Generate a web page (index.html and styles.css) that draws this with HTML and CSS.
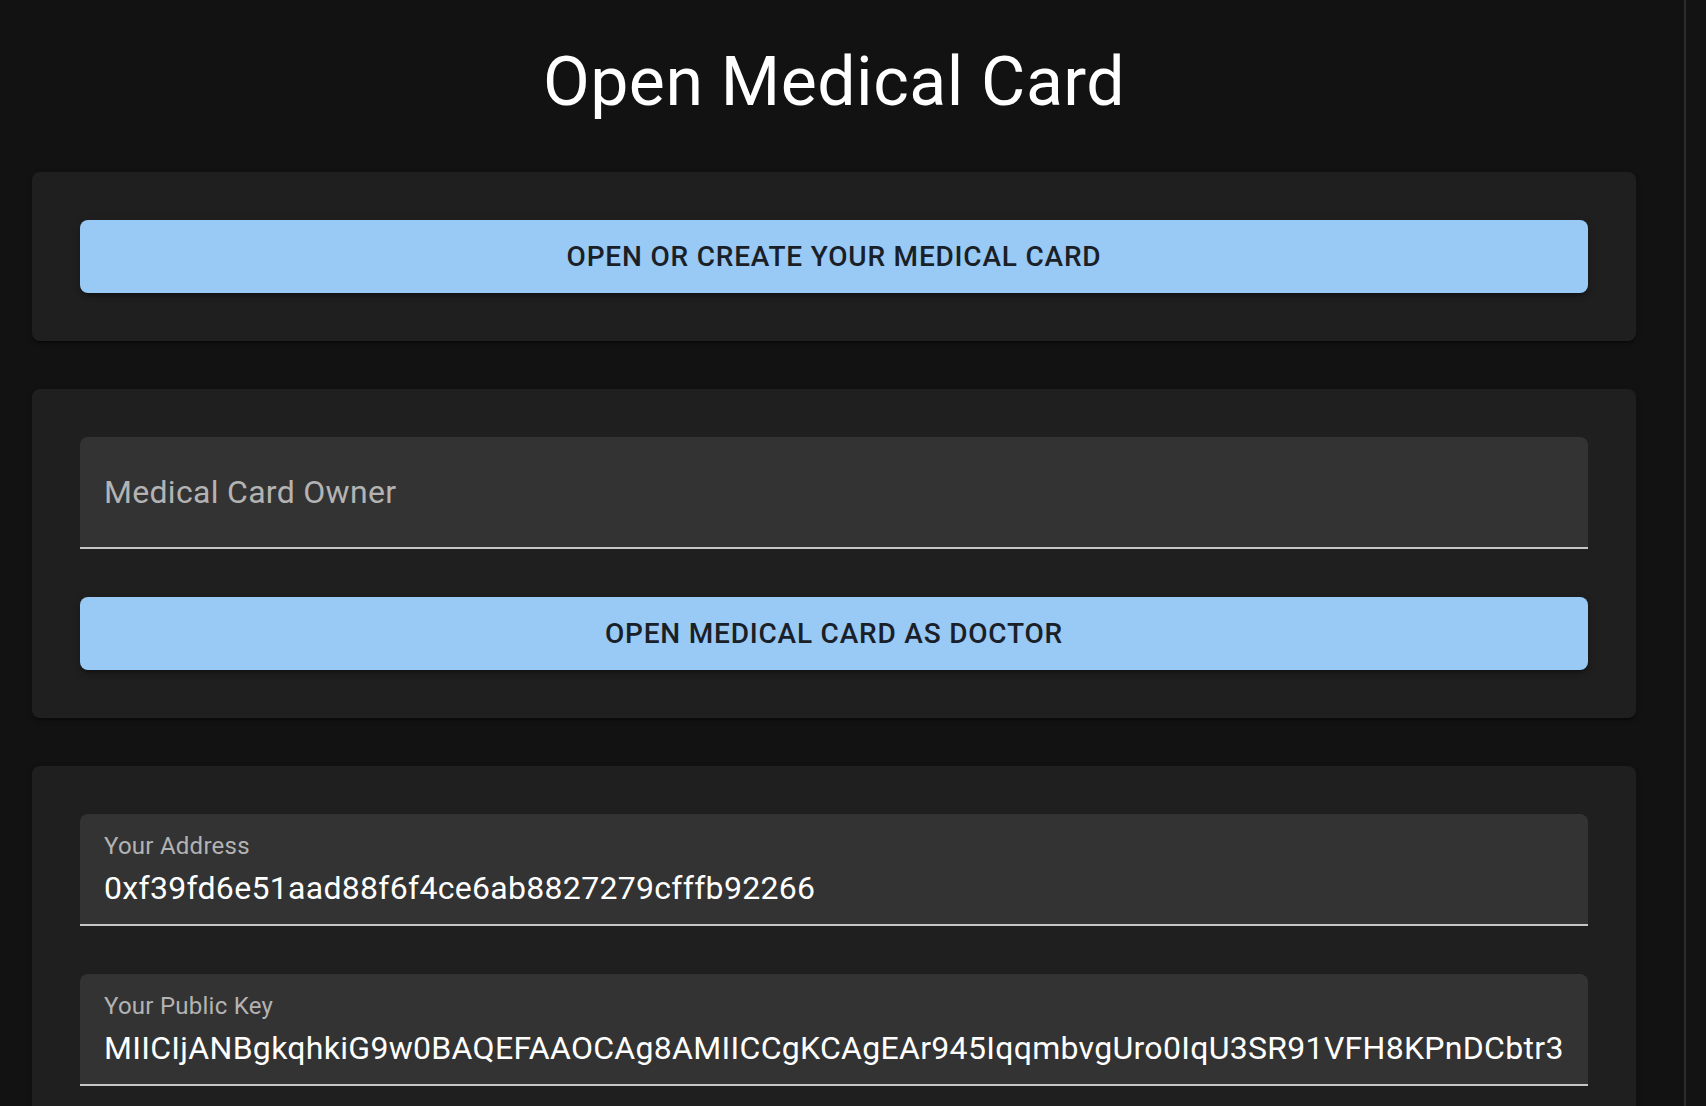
FILE: index.html
```html
<!DOCTYPE html>
<html lang="en">
<head>
<meta charset="utf-8">
<title>Open Medical Card</title>
<link rel="stylesheet" href="styles.css">
</head>
<body>
<div class="app">
  <main class="main">
    <h1 class="title">Open Medical Card</h1>

    <section class="card">
      <button class="btn" type="button">Open or create your medical card</button>
    </section>

    <section class="card">
      <div class="field">
        <label class="field-label" for="owner">Medical Card Owner</label>
        <input class="field-input" id="owner" type="text">
      </div>
      <button class="btn btn-spaced" type="button">Open medical card as doctor</button>
    </section>

    <section class="card">
      <div class="field">
        <label class="field-label shrink" for="addr">Your Address</label>
        <input class="field-input" id="addr" type="text" readonly value="0xf39fd6e51aad88f6f4ce6ab8827279cfffb92266">
      </div>
      <div class="field field-spaced">
        <label class="field-label shrink" for="pk">Your Public Key</label>
        <input class="field-input" id="pk" type="text" readonly value="MIICIjANBgkqhkiG9w0BAQEFAAOCAg8AMIICCgKCAgEAr945IqqmbvgUro0IqU3SR91VFH8KPnDCbtr3xQk7WzM2pVb1yLc9ZHdNf0EaG8uJtR4s">
      </div>
    </section>
  </main>
  <div class="rail"></div>
</div>
</body>
</html>
```

FILE: styles.css
```css
* {
  box-sizing: border-box;
}

html, body {
  margin: 0;
  padding: 0;
  height: 100%;
  background: #121212;
}

body {
  font-family: Roboto, "Liberation Sans", sans-serif;
  color: #ffffff;
  overflow: hidden;
}

.app {
  display: flex;
  height: 100vh;
  overflow: hidden;
}

.main {
  flex: 1;
  min-width: 0;
  padding: 40px 48px 0 32px;
  display: flex;
  flex-direction: column;
  gap: 48px;
  overflow: hidden;
}

.rail {
  width: 22px;
  flex: none;
  border-left: 2px solid #2c2c2c;
  background: #131313;
}

.title {
  margin: 0;
  font-size: 68px;
  font-weight: 400;
  line-height: 84px;
  text-align: center;
  color: #ffffff;
  letter-spacing: 0.5px;
}

.card {
  flex: none;
  background: #1f1f1f;
  border-radius: 8px;
  padding: 48px;
  display: flex;
  flex-direction: column;
  box-shadow: 0 4px 2px -2px rgba(0, 0, 0, 0.2), 0 2px 2px 0 rgba(0, 0, 0, 0.14), 0 2px 6px 0 rgba(0, 0, 0, 0.12);
}

.btn {
  display: block;
  width: 100%;
  border: 0;
  margin: 0;
  padding: 12px 32px;
  background: #99c9f5;
  color: #1a2027;
  border-radius: 8px;
  font-family: Roboto, "Liberation Sans", sans-serif;
  font-size: 28px;
  font-weight: 500;
  line-height: 49px;
  letter-spacing: 0.8px;
  text-transform: uppercase;
  text-align: center;
  cursor: pointer;
  box-shadow: 0 6px 2px -4px rgba(0, 0, 0, 0.2), 0 4px 4px 0 rgba(0, 0, 0, 0.14), 0 2px 10px 0 rgba(0, 0, 0, 0.12);
}

.btn-spaced {
  margin-top: 48px;
}

.field {
  position: relative;
  height: 112px;
  background: #333333;
  border-radius: 8px 8px 0 0;
  border-bottom: 2px solid #c6c6c6;
}

.field-spaced {
  margin-top: 48px;
}

.field-label {
  position: absolute;
  left: 24px;
  top: 32px;
  font-size: 32px;
  line-height: 46px;
  letter-spacing: 0.3px;
  color: #b3b3b3;
  white-space: nowrap;
  pointer-events: none;
}

.field-label.shrink {
  top: 15px;
  font-size: 24px;
  line-height: 34.5px;
  letter-spacing: 0.25px;
}

.field-input {
  display: block;
  width: 100%;
  height: 110px;
  margin: 0;
  border: 0;
  outline: none;
  background: transparent;
  padding: 51px 24px 13px;
  font-family: Roboto, "Liberation Sans", sans-serif;
  font-size: 32px;
  line-height: 46px;
  color: #ffffff;
  letter-spacing: 0.3px;
}
```
